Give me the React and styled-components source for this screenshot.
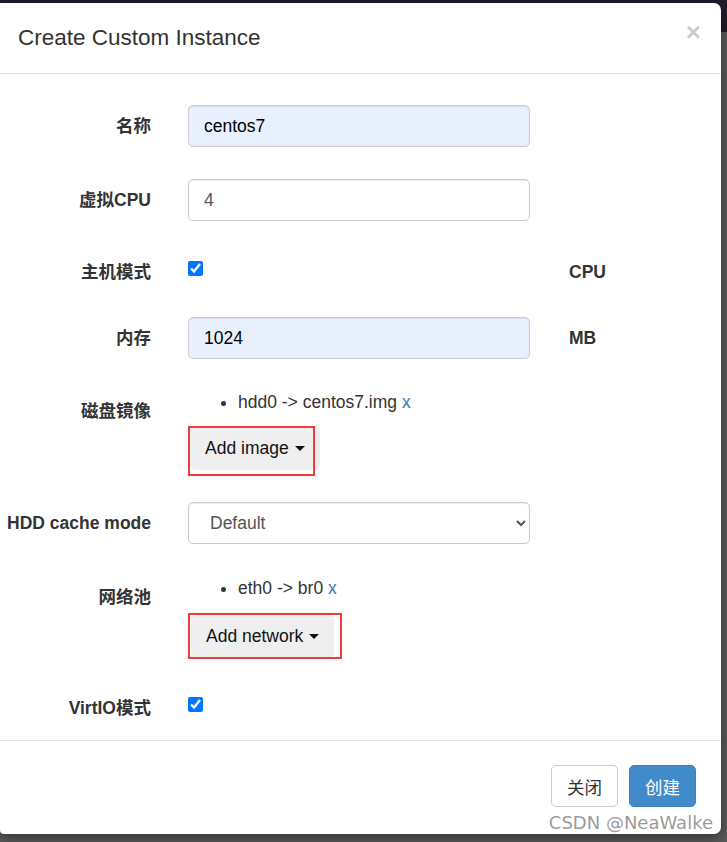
import styled, { createGlobalStyle } from 'styled-components';

const GlobalStyle = createGlobalStyle`
  html, body {
    margin: 0;
    padding: 0;
  }
  body {
    background: linear-gradient(to bottom, #201a2c 0, #201a2c 32px, #5a5a5a 32px);
    font-family: 'Liberation Sans', Arial, 'Noto Sans CJK SC', sans-serif;
    color: #333;
    overflow: hidden;
  }
`;

const Page = styled.div`
  width: 727px;
  height: 842px;
  padding-top: 3px;
  box-sizing: border-box;
`;

const Modal = styled.div`
  position: relative;
  width: 721px;
  background: #fff;
  border-radius: 0 7px 7px 4px;
  box-shadow: 0 4px 14px rgba(0, 0, 0, 0.45);
`;

const Header = styled.div`
  display: flex;
  align-items: center;
  justify-content: space-between;
  padding: 19px 20px 19px 18px;
  border-bottom: 1px solid #e5e5e5;
`;

const Title = styled.h4`
  margin: 0;
  font-size: 22.5px;
  line-height: 32px;
  font-weight: normal;
  color: #333;
`;

const Close = styled.span`
  font-size: 26px;
  font-weight: bold;
  line-height: 1;
  color: #000;
  opacity: 0.2;
  margin-top: -12px;
`;

const Body = styled.div`
  padding: 31px 0 19px 0;
`;

const Row = styled.div`
  display: grid;
  grid-template-columns: 151px 342px 1fr;
  column-gap: 37px;
  align-items: start;
  margin-bottom: ${(p) => p.$mb ?? 31}px;
`;

const Label = styled.label`
  text-align: right;
  font-weight: bold;
  font-size: 17.5px;
  line-height: 25px;
  padding-top: 9px;
  white-space: nowrap;
  font-family: 'Liberation Sans', Arial, 'Noto Sans CJK SC', sans-serif;
`;

const Unit = styled(Label)`
  text-align: left;
  padding-left: 2px;
`;

const Input = styled.input`
  box-sizing: border-box;
  width: 100%;
  height: 42px;
  padding: 0 15px;
  border: 1px solid #ccc;
  border-radius: 5px;
  font: 17.5px 'Liberation Sans', Arial, sans-serif;
  color: ${(p) => (p.$filled ? '#000' : '#555')};
  background: ${(p) => (p.$filled ? '#e8f0fe' : '#fff')};
  box-shadow: inset 0 1px 1px rgba(0, 0, 0, 0.075);
  outline: none;
`;

const Select = styled.select`
  box-sizing: border-box;
  width: 100%;
  height: 42px;
  padding: 0 12px 0 17px;
  border: 1px solid #ccc;
  border-radius: 5px;
  font: 17.5px 'Liberation Sans', Arial, sans-serif;
  color: #555;
  background: #fff;
  box-shadow: inset 0 1px 1px rgba(0, 0, 0, 0.075);
  outline: none;
`;

const Check = styled.input`
  width: 15px;
  height: 15px;
  margin: 10px 0 0 0;
  accent-color: #0075ff;
`;

const Field = styled.div`
  display: flex;
  flex-direction: column;
  align-items: flex-start;
`;

const List = styled.ul`
  margin: 0;
  padding-left: 50px;
  font-size: 17.5px;
  line-height: 25px;
  color: #333;
`;

const Link = styled.a`
  color: #337ab7;
  text-decoration: none;
`;

const DropWrap = styled.div`
  position: relative;
  margin-top: ${(p) => p.$mt}px;
  margin-left: ${(p) => p.$ml}px;
`;

const DropButton = styled.button`
  display: flex;
  align-items: center;
  height: 43px;
  padding: 0 15px;
  border: none;
  border-radius: 5px;
  background: #efefef;
  font: 17.5px 'Liberation Sans', Arial, sans-serif;
  color: #111;
`;

const Caret = styled.span`
  display: inline-block;
  width: 0;
  height: 0;
  margin-left: 6px;
  border-top: 5px solid #111;
  border-left: 5px solid transparent;
  border-right: 5px solid transparent;
`;

const Mark = styled.div`
  position: absolute;
  left: ${(p) => p.$l}px;
  top: ${(p) => p.$t}px;
  width: ${(p) => p.$w}px;
  height: ${(p) => p.$h}px;
  border: 2px solid #f23a3a;
  box-sizing: border-box;
  pointer-events: none;
`;

const Footer = styled.div`
  display: flex;
  justify-content: flex-end;
  gap: 11px;
  padding: 24px 25px 27px;
  border-top: 1px solid #e5e5e5;
`;

const FooterButton = styled.button`
  height: 42px;
  padding: 0 15px;
  border-radius: 5px;
  border: 1px solid ${(p) => (p.$primary ? '#3b82c2' : '#ccc')};
  background: ${(p) => (p.$primary ? '#428bca' : '#fff')};
  color: ${(p) => (p.$primary ? '#fff' : '#333')};
  font: 17.5px 'Noto Sans CJK SC', sans-serif;
`;

const Watermark = styled.div`
  position: absolute;
  right: 8px;
  bottom: 0;
  font: 18px 'DejaVu Sans', sans-serif;
  line-height: 22px;
  color: rgba(120, 120, 120, 0.75);
  pointer-events: none;
`;

export default function App() {
  return (
    <>
      <GlobalStyle />
      <Page>
        <Modal>
          <Header>
            <Title>Create Custom Instance</Title>
            <Close>×</Close>
          </Header>
          <Body>
            <Row $mb={32}>
              <Label>名称</Label>
              <Input $filled defaultValue="centos7" />
            </Row>
            <Row $mb={30}>
              <Label>虚拟CPU</Label>
              <Input defaultValue="4" />
            </Row>
            <Row $mb={32}>
              <Label>主机模式</Label>
              <Field>
                <Check type="checkbox" defaultChecked />
              </Field>
              <Unit>CPU</Unit>
            </Row>
            <Row>
              <Label>内存</Label>
              <Input $filled defaultValue="1024" />
              <Unit>MB</Unit>
            </Row>
            <Row $mb={32}>
              <Label>磁盘镜像</Label>
              <Field>
                <List>
                  <li>
                    hdd0 -&gt; centos7.img <Link>x</Link>
                  </li>
                </List>
                <DropWrap $mt={12} $ml={2}>
                  <DropButton>
                    Add image <Caret />
                  </DropButton>
                  <Mark $l={-2} $t={-1} $w={127} $h={50} />
                </DropWrap>
              </Field>
            </Row>
            <Row $mb={32}>
              <Label>HDD cache mode</Label>
              <Select defaultValue="default">
                <option value="default">Default</option>
              </Select>
            </Row>
            <Row $mb={29}>
              <Label>网络池</Label>
              <Field>
                <List>
                  <li>
                    eth0 -&gt; br0 <Link>x</Link>
                  </li>
                </List>
                <DropWrap $mt={14} $ml={3}>
                  <DropButton>
                    Add network <Caret />
                  </DropButton>
                  <Mark $l={-3} $t={-2} $w={154} $h={46} />
                </DropWrap>
              </Field>
            </Row>
            <Row $mb={0}>
              <Label>VirtIO模式</Label>
              <Field>
                <Check type="checkbox" defaultChecked />
              </Field>
            </Row>
          </Body>
          <Footer>
            <FooterButton>关闭</FooterButton>
            <FooterButton $primary>创建</FooterButton>
          </Footer>
          <Watermark>CSDN @NeaWalke</Watermark>
        </Modal>
      </Page>
    </>
  );
}
